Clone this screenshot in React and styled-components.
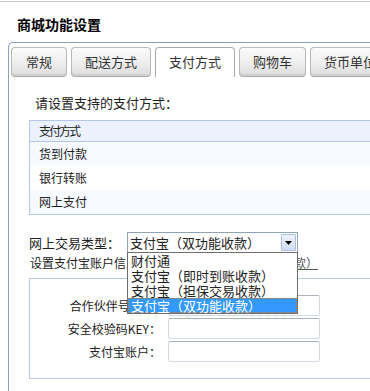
import React from "react";
import styled, { createGlobalStyle } from "styled-components";

const GlobalStyle = createGlobalStyle`
	html, body {
		margin: 0;
		padding: 0;
		background: #fff;
		overflow: hidden;
	}
	body {
		font-family: "Noto Sans CJK SC", "DejaVu Sans", sans-serif;
		color: #222;
	}
`;

const Page = styled.div`
	width: 370px;
	height: 391px;
	overflow: hidden;
	padding-top: 1px;
	box-sizing: border-box;
	display: flex;
	flex-direction: column;
`;

const TopRule = styled.div`
	height: 1px;
	background: #c6c6c6;
`;

const Title = styled.h1`
	margin: 0;
	height: 40px;
	padding: 4px 0 0 17px;
	box-sizing: border-box;
	font-size: 14px;
	font-weight: bold;
	line-height: 36px;
	color: #000;
`;

const Panel = styled.div`
	flex: 1;
	width: 440px;
	margin-left: 8px;
	border: 1px solid #8aa1ba;
	border-right: none;
	border-bottom: none;
	border-top-left-radius: 5px;
`;

const TabBar = styled.div`
	display: flex;
	gap: 4px;
	padding: 4px 0 0 2px;
	height: 30px;
`;

const Tab = styled.div`
	height: 30px;
	box-sizing: border-box;
	padding: 0 ${(p) => p.pad}px;
	font-size: 13px;
	line-height: 28px;
	color: #333;
	white-space: nowrap;
	border: 1px solid ${(p) => (p.active ? "#a9a9a9" : "#b9b9b9")};
	border-radius: ${(p) => (p.active ? "4px 4px 0 0" : "4px")};
	border-bottom: ${(p) => (p.active ? "none" : "1px solid #a9a9a9")};
	background: ${(p) =>
		p.active ? "#fff" : "linear-gradient(#fbfbfb, #ececec 60%, #dcdcdc)"};
	box-shadow: ${(p) => (p.active ? "none" : "inset 0 -2px 0 #d0d0d0")};
`;

const Body = styled.div`
	padding-left: 20px;
`;

const Intro = styled.div`
	margin: 16px 0 0 6px;
	font-size: 13px;
	line-height: 20px;
`;

const MethodTable = styled.div`
	margin-top: 7px;
	border: 1px solid #b4c7ea;
	border-right: none;
`;

const MethodRow = styled.div`
	height: ${(p) => (p.head ? 20 : 24)}px;
	padding-left: 9px;
	font-size: 12px;
	line-height: ${(p) => (p.head ? 20 : 24)}px;
	letter-spacing: ${(p) => (p.head ? "-2px" : "0")};
	background: ${(p) => p.bg};
	border-bottom: ${(p) => (p.head ? "1px solid #b4c7ea" : "none")};
`;

const TypeRow = styled.div`
	display: flex;
	align-items: center;
	margin-top: 17px;
`;

const TypeLabel = styled.div`
	width: 98px;
	font-size: 13px;
	line-height: 21px;
`;

const SelectWrap = styled.div`
	position: relative;
`;

const SelectBox = styled.div`
	width: 171px;
	height: 21px;
	box-sizing: border-box;
	display: flex;
	align-items: center;
	justify-content: space-between;
	border: 1px solid #8ea3b8;
	background: #fff;
	font-size: 13px;
	padding-left: 2px;
`;

const ArrowButton = styled.div`
	width: 15px;
	height: 17px;
	margin-right: 1px;
	box-sizing: border-box;
	display: flex;
	align-items: center;
	justify-content: center;
	border: 1px solid #a9c0e4;
	border-radius: 1px;
	background: linear-gradient(#eef3fd, #cfddf5);
`;

const DropList = styled.div`
	position: absolute;
	top: 100%;
	left: 0;
	margin-top: -1px;
	width: 171px;
	box-sizing: border-box;
	border: 1px solid #6e6e6e;
	background: #fff;
	z-index: 2;
`;

const Option = styled.div`
	height: 15px;
	box-sizing: border-box;
	padding-left: 2px;
	font-size: 13px;
	line-height: 14px;
	white-space: nowrap;
	color: ${(p) => (p.selected ? "#fff" : "#222")};
	background: ${(p) => (p.selected ? "#3399ff" : "#fff")};
	border: 1px dotted ${(p) => (p.selected ? "#c8783a" : "transparent")};
`;

const AccountHint = styled.div`
	margin-left: 1px;
	font-size: 12px;
	line-height: 20px;
	white-space: nowrap;
	color: #222;

	a {
		color: #555;
		text-decoration: underline;
	}
`;

const AccountBox = styled.div`
	margin-top: 5px;
	padding: 16px 0;
	border: 1px solid #b9c7df;
	border-right: none;
	display: grid;
	grid-template-columns: 131px 152px;
	column-gap: 7px;
	row-gap: 2px;
	align-items: center;
`;

const FieldLabel = styled.div`
	text-align: right;
	font-size: 12px;
	white-space: nowrap;
`;

const Field = styled.div`
	height: 21px;
	box-sizing: border-box;
	border: 1px solid #d3d9e2;
	border-top-color: #aab1bb;
	border-radius: 2px;
	background: #fff;
`;

const tabs = [
	{ name: "常规", pad: 14 },
	{ name: "配送方式", pad: 13 },
	{ name: "支付方式", pad: 13, active: true },
	{ name: "购物车", pad: 13 },
	{ name: "货币单位", pad: 13 },
];

const methods = ["货到付款", "银行转账", "网上支付"];

const options = [
	"财付通",
	"支付宝（即时到账收款）",
	"支付宝（担保交易收款）",
	"支付宝（双功能收款）",
];

const fields = ["合作伙伴号PID：", "安全校验码KEY：", "支付宝账户："];

export default function App() {
	return (
		<Page>
			<GlobalStyle />
			<TopRule />
			<Title>商城功能设置</Title>
			<Panel>
				<TabBar>
					{tabs.map((t) => (
						<Tab key={t.name} pad={t.pad} active={t.active}>
							{t.name}
						</Tab>
					))}
				</TabBar>
				<Body>
					<Intro>请设置支持的支付方式：</Intro>
					<MethodTable>
						<MethodRow head bg="#ecf2fd">
							支付方式
						</MethodRow>
						{methods.map((m, i) => (
							<MethodRow key={m} bg={i % 2 === 0 ? "#f6f9fe" : "#fff"}>
								{m}
							</MethodRow>
						))}
					</MethodTable>
					<TypeRow>
						<TypeLabel>网上交易类型：</TypeLabel>
						<SelectWrap>
							<SelectBox>
								<span>支付宝（双功能收款）</span>
								<ArrowButton>
									<svg width="7" height="4" viewBox="0 0 7 4">
										<path d="M0 0h7L3.5 4z" fill="#000" />
									</svg>
								</ArrowButton>
							</SelectBox>
							<DropList>
								{options.map((o, i) => (
									<Option key={o} selected={i === options.length - 1}>
										{o}
									</Option>
								))}
							</DropList>
						</SelectWrap>
					</TypeRow>
					<AccountHint>
						设置支付宝账户信息<a>（现在就申请支付宝双功能收款）</a>
					</AccountHint>
					<AccountBox>
						{fields.map((f) => (
							<React.Fragment key={f}>
								<FieldLabel>{f}</FieldLabel>
								<Field />
							</React.Fragment>
						))}
					</AccountBox>
				</Body>
			</Panel>
		</Page>
	);
}
